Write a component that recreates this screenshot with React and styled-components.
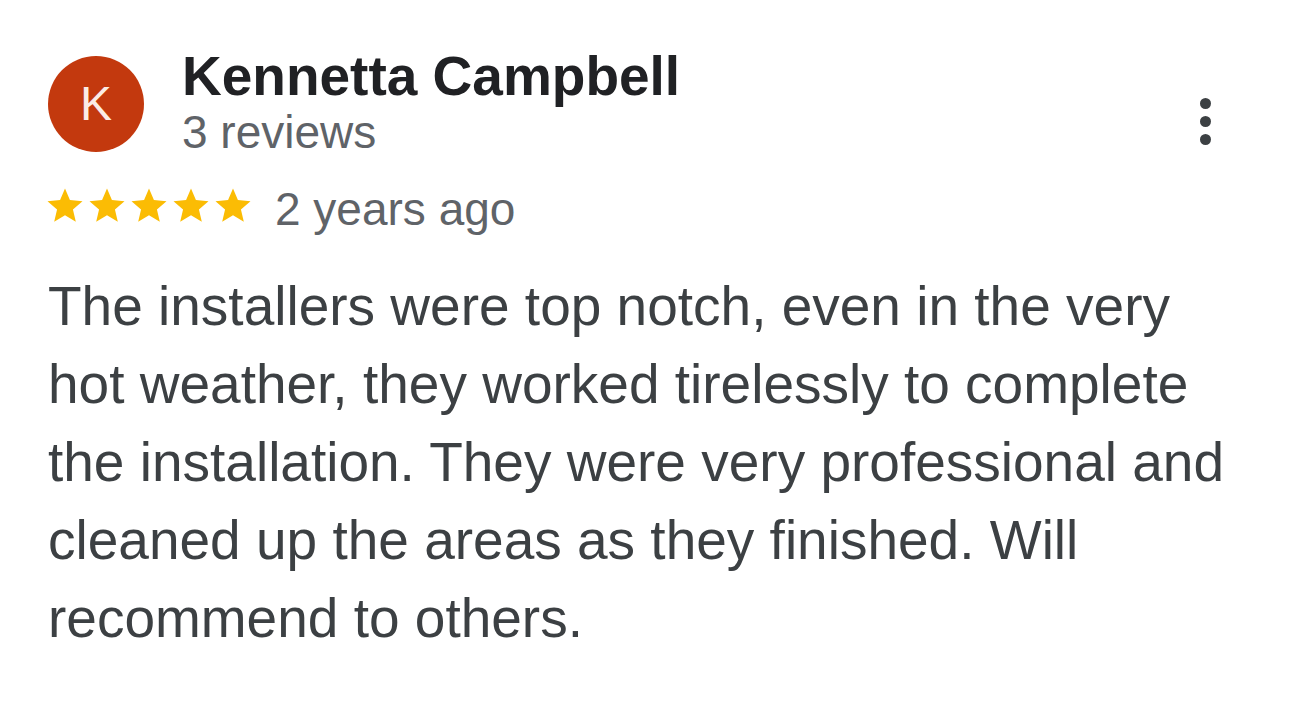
import React from 'react';
import styled, { createGlobalStyle } from 'styled-components';

const GlobalStyle = createGlobalStyle`
  html, body {
    margin: 0;
    padding: 0;
    background: #ffffff;
  }
  body {
    font-family: "Liberation Sans", Arial, Helvetica, sans-serif;
    -webkit-font-smoothing: antialiased;
  }
`;

const Card = styled.div`
  width: 1290px;
  height: 712px;
  box-sizing: border-box;
  padding: 46px 79px 0 48px;
  background: #ffffff;
`;

const Header = styled.div`
  display: flex;
  align-items: flex-start;
`;

const Avatar = styled.div`
  width: 96px;
  height: 96px;
  margin-top: 10px;
  border-radius: 50%;
  background: #c3390e;
  color: #fbece6;
  display: flex;
  align-items: center;
  justify-content: center;
  font-size: 48px;
  line-height: 1;
  flex-shrink: 0;
`;

const Author = styled.div`
  display: flex;
  flex-direction: column;
  margin-left: 38px;
  flex: 1;
`;

const Name = styled.div`
  font-size: 55px;
  line-height: 60px;
  font-weight: 700;
  color: #202124;
`;

const Reviews = styled.div`
  font-size: 46px;
  line-height: 50px;
  color: #5f6368;
  margin-top: 1px;
`;

const MoreButton = styled.div`
  display: flex;
  flex-direction: column;
  gap: 7px;
  margin-top: 52px;
`;

const Dot = styled.span`
  width: 11px;
  height: 11px;
  border-radius: 50%;
  background: #3c4043;
`;

const RatingRow = styled.div`
  display: flex;
  align-items: center;
  margin-top: 27px;
  height: 50px;
`;

const Stars = styled.div`
  display: flex;
  margin-left: -4px;
  margin-top: -7px;
`;

const Age = styled.span`
  font-size: 46px;
  line-height: 50px;
  color: #5f6368;
  margin-left: 21px;
`;

const Body = styled.p`
  margin: 33px 0 0;
  width: 1190px;
  font-size: 55px;
  line-height: 78px;
  color: #3c4043;
`;

const Star = () => (
  <svg width="42" height="42" viewBox="0 0 24 24">
    <path
      fill="#fbbc04"
      d="M12 17.27L18.18 21l-1.64-7.03L22 9.24l-7.19-.61L12 2 9.19 8.63 2 9.24l5.46 4.73L5.82 21z"
    />
  </svg>
);

export default function App() {
  return (
    <>
      <GlobalStyle />
      <Card>
        <Header>
          <Avatar>K</Avatar>
          <Author>
            <Name>Kennetta Campbell</Name>
            <Reviews>3 reviews</Reviews>
          </Author>
          <MoreButton>
            <Dot />
            <Dot />
            <Dot />
          </MoreButton>
        </Header>
        <RatingRow>
          <Stars>
            {[0, 1, 2, 3, 4].map((i) => (
              <Star key={i} />
            ))}
          </Stars>
          <Age>2 years ago</Age>
        </RatingRow>
        <Body>
          The installers were top notch, even in the very hot weather, they
          worked tirelessly to complete the installation. They were very
          professional and cleaned up the areas as they finished. Will
          recommend to others.
        </Body>
      </Card>
    </>
  );
}
